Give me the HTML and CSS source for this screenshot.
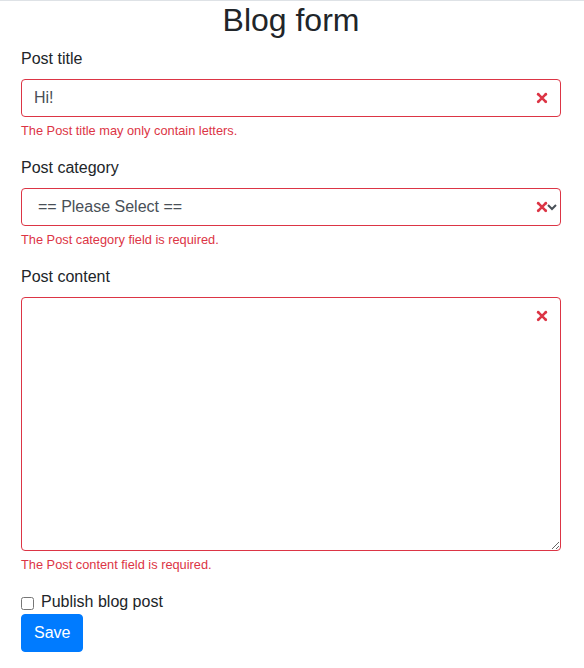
FILE: index.html
```html
<!DOCTYPE html>
<html lang="en">
<head>
<meta charset="utf-8">
<title>Blog form</title>
<link rel="stylesheet" href="styles.css">
</head>
<body>
<div class="page">
  <h2 class="title">Blog form</h2>
  <form class="form">
    <div class="group">
      <label class="label" for="title">Post title</label>
      <div class="field">
        <input id="title" class="control" type="text" value="Hi!">
        <svg class="x-icon" width="18" height="18" viewBox="-2 -2 7 7" fill="#dc3545"><path stroke="#dc3545" d="M0 0l3 3m0-3L0 3"/><circle r=".5"/><circle cx="3" r=".5"/><circle cy="3" r=".5"/><circle cx="3" cy="3" r=".5"/></svg>
      </div>
      <div class="feedback">The Post title may only contain letters.</div>
    </div>
    <div class="group">
      <label class="label" for="cat">Post category</label>
      <div class="field">
        <select id="cat" class="control select">
          <option>== Please Select ==</option>
        </select>
        <svg class="x-icon" width="18" height="18" viewBox="-2 -2 7 7" fill="#dc3545"><path stroke="#dc3545" d="M0 0l3 3m0-3L0 3"/><circle r=".5"/><circle cx="3" r=".5"/><circle cy="3" r=".5"/><circle cx="3" cy="3" r=".5"/></svg>
      </div>
      <div class="feedback">The Post category field is required.</div>
    </div>
    <div class="group">
      <label class="label" for="content">Post content</label>
      <div class="field">
        <textarea id="content" class="control area" rows="10"></textarea>
        <svg class="x-icon top" width="18" height="18" viewBox="-2 -2 7 7" fill="#dc3545"><path stroke="#dc3545" d="M0 0l3 3m0-3L0 3"/><circle r=".5"/><circle cx="3" r=".5"/><circle cy="3" r=".5"/><circle cx="3" cy="3" r=".5"/></svg>
      </div>
      <div class="feedback">The Post content field is required.</div>
    </div>
    <div class="check">
      <input id="publish" class="check-input" type="checkbox">
      <label class="check-label" for="publish">Publish blog post</label>
    </div>
    <button type="button" class="btn">Save</button>
  </form>
</div>
</body>
</html>
```
FILE: styles.css
```css
* { box-sizing: border-box; }
html, body { margin: 0; }
body {
  font-family: "Liberation Sans", Arial, sans-serif;
  font-size: 16px;
  line-height: 1.5;
  color: #212529;
  background: #fff;
  border-top: 1px solid #dee2e6;
}
.page {
  padding: 0 23px 0 21px;
}
.title {
  margin: 0 0 8px;
  font-size: 32px;
  font-weight: 500;
  line-height: 1.2;
  text-align: center;
}
.form { margin: 0; }
.group { margin-bottom: 16px; }
.group:first-child { margin-bottom: 15px; }
.label {
  display: inline-block;
  margin-bottom: 8px;
}
.field { position: relative; }
.control {
  display: block;
  width: 100%;
  height: 38px;
  padding: 6px 36px 6px 12px;
  font-family: inherit;
  font-size: 16px;
  line-height: 1.5;
  color: #495057;
  background: #fff;
  border: 1px solid #dc3545;
  border-radius: 4px;
  margin: 0;
}
.select { padding-right: 6px; }
.area {
  height: auto;
  resize: vertical;
  overflow: auto;
}
.x-icon {
  position: absolute;
  right: 10px;
  top: 10px;
  pointer-events: none;
}
.x-icon.top { top: 10px; }
.feedback {
  margin-top: 4px;
  font-size: 12.8px;
  line-height: 1.5;
  color: #dc3545;
}
.check {
  position: relative;
  display: block;
  padding-left: 20px;
}
.check-input {
  position: absolute;
  margin: 7px 0 0 -20px;
  width: 13px;
  height: 13px;
}
.check-label { display: inline-block; }
.btn {
  display: inline-block;
  font-family: inherit;
  font-size: 16px;
  line-height: 1.5;
  padding: 6px 12px;
  color: #fff;
  background: #007bff;
  border: 1px solid #007bff;
  border-radius: 4px;
  cursor: pointer;
}
```
